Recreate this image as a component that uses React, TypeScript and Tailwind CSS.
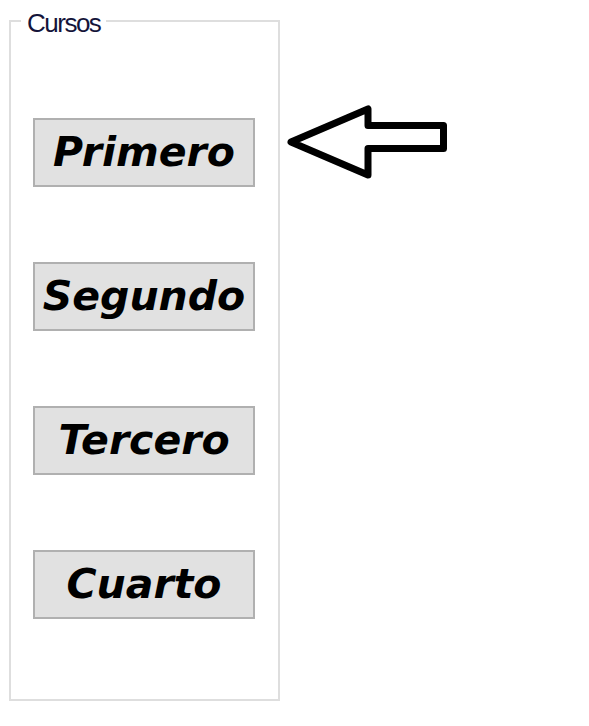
import React from "react";

const labels = ["Primero", "Segundo", "Tercero", "Cuarto"];

export default function App() {
  return (
    <div className="w-[589px] h-[726px] bg-white flex flex-row items-start">
      <div className="relative ml-[9px] mt-[20px] w-[271px] h-[681px] border-2 border-[#dedede] flex flex-col items-start pl-[22px] pt-[96px] gap-[75px]">
        <span
          className="absolute left-[10px] top-[-14px] bg-white px-[6px] text-[26px] leading-[30px] tracking-[-1.5px] text-[#14143a]"
          style={{ fontFamily: '"Liberation Sans", Arial, sans-serif' }}
        >
          Cursos
        </span>
        {labels.map((l) => (
          <button
            key={l}
            className="w-[222px] h-[69px] bg-[#e1e1e1] border-2 border-[#b0b0b0] flex items-center justify-center text-[41px] font-bold italic text-black leading-none"
            style={{ fontFamily: '"DejaVu Sans", Verdana, sans-serif' }}
          >
            {l}
          </button>
        ))}
      </div>
      <svg
        className="ml-[4px] mt-[100px]"
        width="170"
        height="82"
        viewBox="0 0 170 82"
      >
        <polygon
          points="7,42 84,9 84,25.5 159.5,25.5 159.5,48.5 84,48.5 84,75"
          fill="white"
          stroke="black"
          strokeWidth="7"
          strokeLinejoin="round"
        />
      </svg>
    </div>
  );
}
